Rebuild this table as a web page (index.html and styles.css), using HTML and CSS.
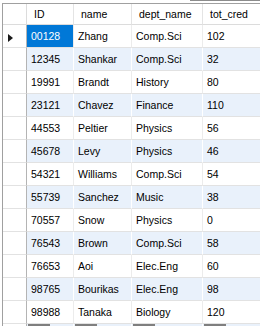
FILE: index.html
```html
<!DOCTYPE html>
<html>
<head>
<meta charset="utf-8">
<link rel="stylesheet" href="styles.css">
</head>
<body>
<div class="grid">
  <div class="topstrip"><span class="topline"></span></div>
  <div class="row head">
    <div class="cell gutter"></div>
    <div class="cell c-id">ID</div>
    <div class="cell c-name">name</div>
    <div class="cell c-dept">dept_name</div>
    <div class="cell c-tot">tot_cred</div>
  </div>
  <div class="row">
    <div class="cell gutter"><span class="current"></span></div>
    <div class="cell c-id selected">00128</div>
    <div class="cell c-name">Zhang</div>
    <div class="cell c-dept">Comp.Sci</div>
    <div class="cell c-tot">102</div>
  </div>
  <div class="row alt">
    <div class="cell gutter"></div>
    <div class="cell c-id">12345</div>
    <div class="cell c-name">Shankar</div>
    <div class="cell c-dept">Comp.Sci</div>
    <div class="cell c-tot">32</div>
  </div>
  <div class="row">
    <div class="cell gutter"></div>
    <div class="cell c-id">19991</div>
    <div class="cell c-name">Brandt</div>
    <div class="cell c-dept">History</div>
    <div class="cell c-tot">80</div>
  </div>
  <div class="row alt">
    <div class="cell gutter"></div>
    <div class="cell c-id">23121</div>
    <div class="cell c-name">Chavez</div>
    <div class="cell c-dept">Finance</div>
    <div class="cell c-tot">110</div>
  </div>
  <div class="row">
    <div class="cell gutter"></div>
    <div class="cell c-id">44553</div>
    <div class="cell c-name">Peltier</div>
    <div class="cell c-dept">Physics</div>
    <div class="cell c-tot">56</div>
  </div>
  <div class="row alt">
    <div class="cell gutter"></div>
    <div class="cell c-id">45678</div>
    <div class="cell c-name">Levy</div>
    <div class="cell c-dept">Physics</div>
    <div class="cell c-tot">46</div>
  </div>
  <div class="row">
    <div class="cell gutter"></div>
    <div class="cell c-id">54321</div>
    <div class="cell c-name">Williams</div>
    <div class="cell c-dept">Comp.Sci</div>
    <div class="cell c-tot">54</div>
  </div>
  <div class="row alt">
    <div class="cell gutter"></div>
    <div class="cell c-id">55739</div>
    <div class="cell c-name">Sanchez</div>
    <div class="cell c-dept">Music</div>
    <div class="cell c-tot">38</div>
  </div>
  <div class="row">
    <div class="cell gutter"></div>
    <div class="cell c-id">70557</div>
    <div class="cell c-name">Snow</div>
    <div class="cell c-dept">Physics</div>
    <div class="cell c-tot">0</div>
  </div>
  <div class="row alt">
    <div class="cell gutter"></div>
    <div class="cell c-id">76543</div>
    <div class="cell c-name">Brown</div>
    <div class="cell c-dept">Comp.Sci</div>
    <div class="cell c-tot">58</div>
  </div>
  <div class="row">
    <div class="cell gutter"></div>
    <div class="cell c-id">76653</div>
    <div class="cell c-name">Aoi</div>
    <div class="cell c-dept">Elec.Eng</div>
    <div class="cell c-tot">60</div>
  </div>
  <div class="row alt">
    <div class="cell gutter"></div>
    <div class="cell c-id">98765</div>
    <div class="cell c-name">Bourikas</div>
    <div class="cell c-dept">Elec.Eng</div>
    <div class="cell c-tot">98</div>
  </div>
  <div class="row">
    <div class="cell gutter"></div>
    <div class="cell c-id">98988</div>
    <div class="cell c-name">Tanaka</div>
    <div class="cell c-dept">Biology</div>
    <div class="cell c-tot">120</div>
  </div>
  <div class="row alt newrow">
    <div class="cell gutter"></div>
    <div class="cell c-id"><span class="null"></span></div>
    <div class="cell c-name"><span class="null"></span></div>
    <div class="cell c-dept"><span class="null"></span></div>
    <div class="cell c-tot"><span class="null"></span></div>
  </div>
</div>
</body>
</html>
```
FILE: styles.css
```css
html, body {
  margin: 0;
  padding: 0;
  background: #ffffff;
  overflow: hidden;
}
body {
  width: 260px;
  height: 326px;
  font-family: "Liberation Sans", Arial, sans-serif;
  font-size: 10.5px;
  color: #000000;
}
.grid {
  display: flex;
  flex-direction: column;
  width: 260px;
  height: 326px;
  overflow: hidden;
}
.topstrip {
  flex-shrink: 0;
  height: 3px;
  display: flex;
  justify-content: flex-end;
}
.topline {
  display: block;
  width: 70px;
  height: 1px;
  background: #8c8c8c;
}
.row {
  flex-shrink: 0;
  display: flex;
  width: max-content;
  margin-left: 2px;
  border-left: 1px solid #a0a0a0;
  background: #ffffff;
}
.row.alt {
  background: #e9f1fb;
}
.cell {
  box-sizing: border-box;
  flex-shrink: 0;
  height: 23px;
  display: flex;
  align-items: center;
  padding-left: 4px;
  border-right: 1px solid #ececec;
  border-bottom: 1px solid #e2e2e2;
  white-space: nowrap;
}
.row.alt .cell {
  border-right-color: #ffffff;
}
.gutter {
  width: 24px;
  padding-left: 5px;
  background: #ffffff;
  border-right-color: #b4b4b4;
}
.row.alt .gutter {
  border-right-color: #b4b4b4;
}
.c-id { width: 47px; }
.c-name { width: 58px; }
.c-dept { width: 71px; }
.c-tot { width: 90px; }

.head {
  border-top: 1px solid #a0a0a0;
}
.head .cell {
  height: 21px;
  padding-left: 7px;
  border-right-color: #e4e4e4;
  border-bottom-color: #dcdcdc;
}
.head .gutter {
  border-right-color: #dcdcdc;
}
.selected {
  background: #0078d7;
  color: #ffffff;
}
.current {
  display: block;
  width: 0;
  height: 0;
  margin-top: 3px;
  border-left: 5px solid #1a1a1a;
  border-top: 4px solid transparent;
  border-bottom: 4px solid transparent;
}
.newrow .cell {
  align-items: flex-start;
  padding-left: 1px;
  border-right-color: #ffffff;
}
.null {
  display: block;
  width: 22px;
  height: 14px;
  background: #7f7f7f;
}
```
